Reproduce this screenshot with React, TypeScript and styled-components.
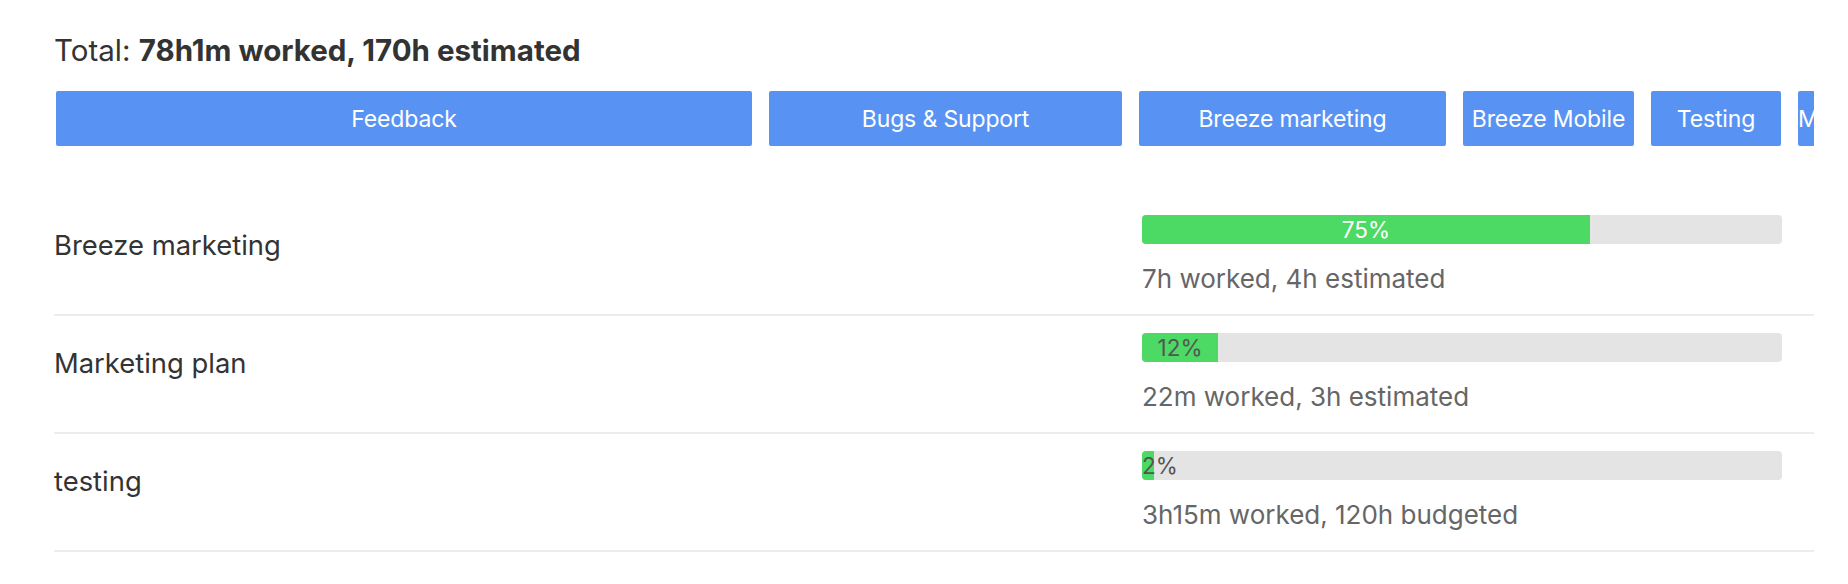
import { createGlobalStyle, styled } from "styled-components";

const GlobalStyle = createGlobalStyle`
  html, body {
    margin: 0;
    padding: 0;
    background: #ffffff;
  }
  body {
    font-family: Inter, "Noto Sans", "Liberation Sans", sans-serif;
    color: #333333;
  }
`;

const Page = styled.div`
  width: 1848px;
  height: 584px;
  box-sizing: border-box;
  padding: 33px 34px 0 54px;
  overflow: hidden;
`;

const Total = styled.div`
  font-size: 29.5px;
  line-height: 34px;
  color: #333333;

  strong {
    font-weight: 700;
  }
`;

const TabStrip = styled.nav`
  display: flex;
  gap: 17px;
  margin-top: 24px;
  padding-left: 2px;
  overflow: hidden;
  white-space: nowrap;
`;

const Tab = styled.button<{ $width: number; $clipped?: boolean }>`
  flex: 0 0 ${(p) => p.$width}px;
  height: 55px;
  border: none;
  border-radius: 2px;
  background: #5893f4;
  color: #ffffff;
  font-family: inherit;
  font-size: 23px;
  letter-spacing: -0.15px;
  padding: 0;
  display: flex;
  align-items: center;
  justify-content: ${(p) => (p.$clipped ? "flex-start" : "center")};
  overflow: hidden;
  cursor: pointer;
`;

const List = styled.div`
  margin-top: 52px;
`;

const Row = styled.div`
  display: grid;
  grid-template-columns: 1088px 1fr;
  box-sizing: border-box;
  height: 118px;
  padding-top: 17px;
  border-bottom: 2px solid #ececec;
`;

const Label = styled.div`
  font-size: 27.4px;
  line-height: 34px;
  margin-top: 13px;
  color: #333333;
`;

const Stats = styled.div`
  padding-right: 32px;
`;

const Bar = styled.div`
  height: 29px;
  border-radius: 4px;
  background: #e4e4e4;
  display: flex;
`;

const Fill = styled.div<{ $light: boolean }>`
  height: 100%;
  border-radius: 4px 0 0 4px;
  background: #4cd964;
  color: ${(p) => (p.$light ? "#ffffff" : "#555555")};
  font-size: 22.5px;
  line-height: 29px;
  text-align: center;
  white-space: nowrap;
`;

const Summary = styled.div`
  margin-top: 18px;
  font-size: 26px;
  line-height: 34px;
  color: #666666;
`;

const tabs = [
  { name: "Feedback", width: 696 },
  { name: "Bugs & Support", width: 353 },
  { name: "Breeze marketing", width: 307 },
  { name: "Breeze Mobile", width: 171 },
  { name: "Testing", width: 130 },
  { name: "Marketing", width: 17, clipped: true },
];

const projects = [
  { name: "Breeze marketing", fill: 70, label: "75%", light: true, summary: "7h worked, 4h estimated" },
  { name: "Marketing plan", fill: 11.9, label: "12%", light: false, summary: "22m worked, 3h estimated" },
  { name: "testing", fill: 1.8, label: "2%", light: false, summary: "3h15m worked, 120h budgeted" },
];

export default function App() {
  return (
    <>
      <GlobalStyle />
      <Page>
        <Total>
          Total: <strong>78h1m worked, 170h estimated</strong>
        </Total>

        <TabStrip>
          {tabs.map((t) => (
            <Tab key={t.name} $width={t.width} $clipped={t.clipped}>
              {t.name}
            </Tab>
          ))}
        </TabStrip>

        <List>
          {projects.map((p) => (
            <Row key={p.name}>
              <Label>{p.name}</Label>
              <Stats>
                <Bar>
                  <Fill $light={p.light} style={{ width: `${p.fill}%` }}>
                    {p.label}
                  </Fill>
                </Bar>
                <Summary>{p.summary}</Summary>
              </Stats>
            </Row>
          ))}
        </List>
      </Page>
    </>
  );
}
